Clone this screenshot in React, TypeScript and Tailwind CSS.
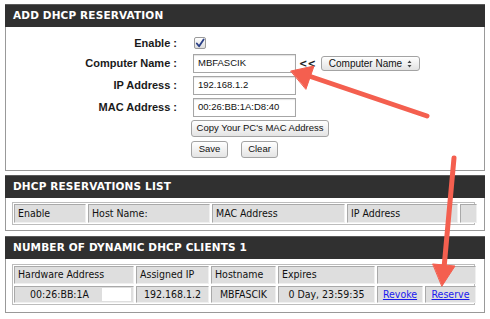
import React from 'react';

const cellFont = "font-['DejaVu_Sans_Condensed','DejaVu_Sans',sans-serif] text-[10.5px] text-[#111]";
const cell = 'bg-[#dedede] border-t border-l border-[#a9a9a9] border-r border-b border-r-[#f0f0f0] border-b-[#f0f0f0] flex items-center';

function Panel({ title, children, className = '' }: { title: string; children: React.ReactNode; className?: string }) {
  return (
    <div className={`ml-[5px] w-[480px] ${className}`}>
      <div className="flex h-[23px] items-center border-t border-[#5a5a5a] bg-[#303030] pl-[8px] font-['DejaVu_Sans',sans-serif] text-[10.5px] font-bold tracking-[0.15px] text-white">
        {title}
      </div>
      <div className="border-x border-b border-[#999] bg-white">{children}</div>
    </div>
  );
}

function Label({ children }: { children: React.ReactNode }) {
  return (
    <div className="w-[171px] text-right font-['Liberation_Sans',Arial,sans-serif] text-[11px] font-bold text-[#1a1a1a]">
      {children}
    </div>
  );
}

function TextBox({ value }: { value: string }) {
  return (
    <div className="ml-[16px] flex h-[19px] w-[103px] items-center border border-[#a6a6a6] bg-white pl-[4px] font-['Liberation_Sans',Arial,sans-serif] text-[9.5px] text-[#111] shadow-[inset_0_1px_1px_rgba(0,0,0,0.12)]">
      {value}
    </div>
  );
}

function Btn({ children, w }: { children: React.ReactNode; w: string }) {
  return (
    <div
      className={`flex h-[17px] ${w} items-center justify-center rounded-[3px] border border-[#a3a3a3] bg-gradient-to-b from-white to-[#e4e4e4] font-['Liberation_Sans',Arial,sans-serif] text-[9.5px] text-[#111]`}
    >
      {children}
    </div>
  );
}

function Arrows() {
  return (
    <svg className="pointer-events-none absolute left-0 top-0" width="490" height="319" viewBox="0 0 490 319">
      <g fill="#f45f4f" stroke="#f45f4f" strokeLinecap="round" strokeLinejoin="round">
        <line x1="427" y1="116" x2="306" y2="75" strokeWidth="5" />
        <polygon points="291,71 314,66 306,89" strokeWidth="1" />
        <line x1="454" y1="158" x2="444" y2="268" strokeWidth="5" />
        <polygon points="442,286 455,266 433,264" strokeWidth="1" />
      </g>
    </svg>
  );
}

export default function App() {
  return (
    <div className="relative h-[319px] w-[490px] overflow-hidden bg-white pt-[4px]">
      <Panel title="ADD DHCP RESERVATION">
        <div className="flex flex-col gap-[3px] pb-[12px] pt-[8px]">
          <div className="flex h-[16px] items-center">
            <Label>Enable :</Label>
            <div className="ml-[17px] flex h-[12px] w-[12px] items-center justify-center rounded-[2px] border border-[#9a9a9a] bg-gradient-to-b from-white to-[#dcdcdc]">
              <svg width="11" height="11" viewBox="0 0 11 11">
                <path d="M2 5.5 L4.5 8.5 L9.5 1" fill="none" stroke="#2a3f86" strokeWidth="2" strokeLinecap="round" strokeLinejoin="round" />
              </svg>
            </div>
          </div>
          <div className="flex h-[19px] items-center">
            <Label>Computer Name :</Label>
            <TextBox value="MBFASCIK" />
            <span className="ml-[3px] font-['DejaVu_Sans',sans-serif] text-[10px] font-bold text-[#222]">&lt;&lt;</span>
            <div className="ml-[5px] flex h-[15px] w-[99px] items-center justify-between rounded-[3px] border border-[#a3a3a3] bg-gradient-to-b from-white to-[#e2e2e2] pl-[7px] pr-[7px] font-['Liberation_Sans',Arial,sans-serif] text-[10px] text-[#111]">
              <span>Computer Name</span>
              <svg width="5" height="8" viewBox="0 0 5 8">
                <path d="M0.5 3 L2.5 0.5 L4.5 3 Z M0.5 5 L2.5 7.5 L4.5 5 Z" fill="#444" />
              </svg>
            </div>
          </div>
          <div className="flex h-[19px] items-center">
            <Label>IP Address :</Label>
            <TextBox value="192.168.1.2" />
          </div>
          <div className="flex h-[19px] items-center">
            <Label>MAC Address :</Label>
            <TextBox value="00:26:BB:1A:D8:40" />
          </div>
          <div className="flex h-[17px] items-center pl-[185px]">
            <Btn w="w-[138px]">Copy Your PC's MAC Address</Btn>
          </div>
          <div className="mt-[1px] flex h-[17px] items-center gap-[13px] pl-[185px]">
            <Btn w="w-[37px]">Save</Btn>
            <Btn w="w-[37px]">Clear</Btn>
          </div>
        </div>
      </Panel>

      <Panel title="DHCP RESERVATIONS LIST" className="mt-[4px]">
        <div className="pb-[5px] pl-[6px] pt-[4px]">
          <div className={`grid w-[463px] grid-cols-[72px_122px_133px_111px_17px] gap-[2px] border border-[#bcbcbc] p-[1px] ${cellFont}`}>
            <div className={`${cell} h-[19px] pl-[3px]`}>Enable</div>
            <div className={`${cell} h-[19px] pl-[3px]`}>Host Name:</div>
            <div className={`${cell} h-[19px] pl-[3px]`}>MAC Address</div>
            <div className={`${cell} h-[19px] pl-[3px]`}>IP Address</div>
            <div className={`${cell} h-[19px]`} />
          </div>
        </div>
      </Panel>

      <Panel title="NUMBER OF DYNAMIC DHCP CLIENTS 1" className="mt-[5px]">
        <div className="pb-[7px] pl-[6px] pt-[5px]">
          <div className={`grid w-[463px] grid-cols-[120px_73px_65px_97px_46px_51px] gap-[2px] border border-[#bcbcbc] p-[1px] ${cellFont}`}>
            <div className={`${cell} h-[18px] pl-[3px]`}>Hardware Address</div>
            <div className={`${cell} h-[18px] pl-[3px]`}>Assigned IP</div>
            <div className={`${cell} h-[18px] pl-[3px]`}>Hostname</div>
            <div className={`${cell} h-[18px] pl-[3px]`}>Expires</div>
            <div className={`${cell} col-span-2 h-[18px]`} />

            <div className={`${cell} h-[17px] pl-[15px]`}>
              <span>00:26:BB:1A</span>
              <span className="ml-[13px] h-[13px] w-[29px] bg-white" />
            </div>
            <div className={`${cell} h-[17px] justify-center`}>192.168.1.2</div>
            <div className={`${cell} h-[17px] justify-center`}>MBFASCIK</div>
            <div className={`${cell} h-[17px] justify-center`}>0 Day, 23:59:35</div>
            <div className={`${cell} h-[17px] justify-center`}>
              <span className="text-[#1a1aee] underline">Revoke</span>
            </div>
            <div className={`${cell} h-[17px] justify-center`}>
              <span className="text-[#1a1aee] underline">Reserve</span>
            </div>
          </div>
        </div>
      </Panel>

      <Arrows />
    </div>
  );
}
